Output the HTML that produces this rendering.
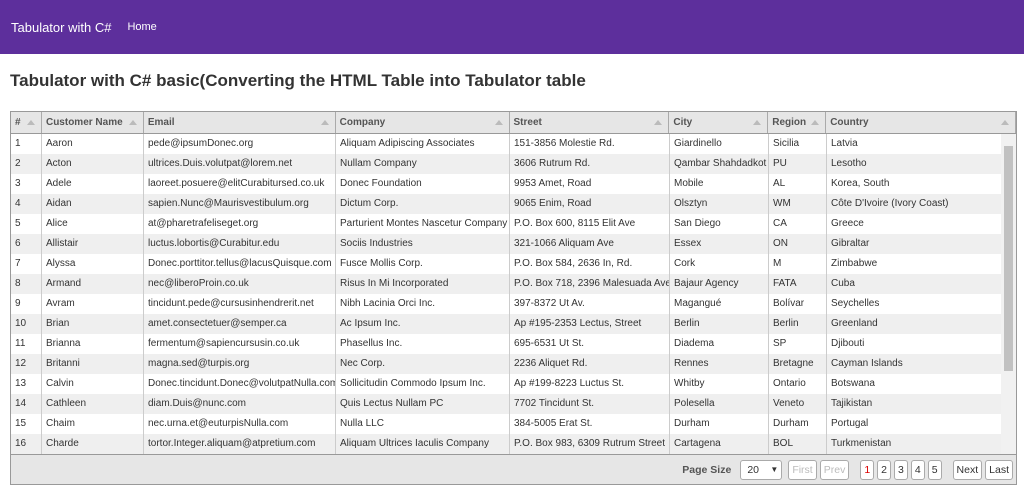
<!DOCTYPE html><html><head><style>
*{box-sizing:border-box}body{margin:0;font-family:"Liberation Sans",sans-serif;background:#fff;width:1024px;height:489px;overflow:hidden}
.nav{height:54px;background:#5d2f9c;color:#fff;display:flex;align-items:center;padding-left:11px}
.nav .b{font-size:13px}.nav .h{font-size:11px;margin-left:16px}
h1{font-size:17px;margin:17px 0 0 10px;color:#333;font-weight:bold;height:40px}
.t{position:absolute;left:10px;top:111px;width:1007px;height:374px;border:1px solid #999;background:#e6e6e6;overflow:hidden}
.hd{display:flex;height:22px;background:#e6e6e6;border-bottom:1px solid #999;font-size:10px;font-weight:bold;color:#555}
.hd div,.r div{border-right:1px solid #ccc;padding:0 4px;white-space:nowrap;overflow:hidden;position:relative}
.hd div{line-height:21px;border-right-color:#aaa}.hd div:after{content:"";position:absolute;right:6px;top:8px;border:4px solid transparent;border-bottom:5px solid #bbb;border-top:0}
.hd .c7{width:190px}
.r{display:flex;height:20px;font-size:10px;color:#333;line-height:20px;background:#fff}.r:nth-child(even){background:#efefef}
.c0{width:31px}.c1{width:102px}.c2{width:192px}.c3{width:174px}.c4{width:160px}.c5{width:99px}.c6{width:58px}.c7{width:175px}
.sb{position:absolute;right:0;top:22px;width:15px;height:321px;background:#f1f1f1}.sb i{position:absolute;left:3px;top:12px;width:9px;height:225px;background:#c1c1c1}
.ft{position:absolute;left:0;right:0;bottom:0;height:30px;background:#e6e6e6;border-top:1px solid #999;display:flex;align-items:center;justify-content:flex-end;padding-right:3px;font-size:10.5px;color:#555}
.bt{border:1px solid #aaa;border-radius:3px;background:#fff;height:20px;line-height:18px;padding:0 3px;margin-left:3px;color:#333}
</style></head><body>
<div class="nav"><span class="b">Tabulator with C#</span><span class="h">Home</span></div>
<h1>Tabulator with C# basic(Converting the HTML Table into Tabulator table</h1>
<div class="t"><div class="hd"><div class="c0">#</div><div class="c1">Customer Name</div><div class="c2">Email</div><div class="c3">Company</div><div class="c4">Street</div><div class="c5">City</div><div class="c6">Region</div><div class="c7">Country</div></div>
<div id="rows"></div>
<div class="sb"><i></i></div>
<div class="ft"><b style="margin-right:6px">Page Size</b><span class="bt" style="width:42px;margin-right:3px;padding-left:6px">20 <span style="float:right;font-size:8px">▼</span></span><span class="bt" style="color:#bbb">First</span><span class="bt" style="color:#bbb;margin-right:8px">Prev</span><span class="bt" style="color:#d00">1</span><span class="bt">2</span><span class="bt">3</span><span class="bt">4</span><span class="bt" style="margin-right:8px">5</span><span class="bt">Next</span><span class="bt">Last</span></div></div>
<script>
var d=[["Aaron","pede@ipsumDonec.org","Aliquam Adipiscing Associates","151-3856 Molestie Rd.","Giardinello","Sicilia","Latvia"],["Acton","ultrices.Duis.volutpat@lorem.net","Nullam Company","3606 Rutrum Rd.","Qambar Shahdadkot","PU","Lesotho"],["Adele","laoreet.posuere@elitCurabitursed.co.uk","Donec Foundation","9953 Amet, Road","Mobile","AL","Korea, South"],["Aidan","sapien.Nunc@Maurisvestibulum.org","Dictum Corp.","9065 Enim, Road","Olsztyn","WM","Côte D'Ivoire (Ivory Coast)"],["Alice","at@pharetrafeliseget.org","Parturient Montes Nascetur Company","P.O. Box 600, 8115 Elit Ave","San Diego","CA","Greece"],["Allistair","luctus.lobortis@Curabitur.edu","Sociis Industries","321-1066 Aliquam Ave","Essex","ON","Gibraltar"],["Alyssa","Donec.porttitor.tellus@lacusQuisque.com","Fusce Mollis Corp.","P.O. Box 584, 2636 In, Rd.","Cork","M","Zimbabwe"],["Armand","nec@liberoProin.co.uk","Risus In Mi Incorporated","P.O. Box 718, 2396 Malesuada Ave","Bajaur Agency","FATA","Cuba"],["Avram","tincidunt.pede@cursusinhendrerit.net","Nibh Lacinia Orci Inc.","397-8372 Ut Av.","Magangué","Bolívar","Seychelles"],["Brian","amet.consectetuer@semper.ca","Ac Ipsum Inc.","Ap #195-2353 Lectus, Street","Berlin","Berlin","Greenland"],["Brianna","fermentum@sapiencursusin.co.uk","Phasellus Inc.","695-6531 Ut St.","Diadema","SP","Djibouti"],["Britanni","magna.sed@turpis.org","Nec Corp.","2236 Aliquet Rd.","Rennes","Bretagne","Cayman Islands"],["Calvin","Donec.tincidunt.Donec@volutpatNulla.com","Sollicitudin Commodo Ipsum Inc.","Ap #199-8223 Luctus St.","Whitby","Ontario","Botswana"],["Cathleen","diam.Duis@nunc.com","Quis Lectus Nullam PC","7702 Tincidunt St.","Polesella","Veneto","Tajikistan"],["Chaim","nec.urna.et@euturpisNulla.com","Nulla LLC","384-5005 Erat St.","Durham","Durham","Portugal"],["Charde","tortor.Integer.aliquam@atpretium.com","Aliquam Ultrices Iaculis Company","P.O. Box 983, 6309 Rutrum Street","Cartagena","BOL","Turkmenistan"]];
var h="";d.forEach(function(r,i){h+='<div class="r"><div class="c0">'+(i+1)+'</div>';r.forEach(function(v,j){h+='<div class="c'+(j+1)+'">'+v+'</div>'});h+='</div>'});document.getElementById("rows").innerHTML=h;
</script></body></html>
